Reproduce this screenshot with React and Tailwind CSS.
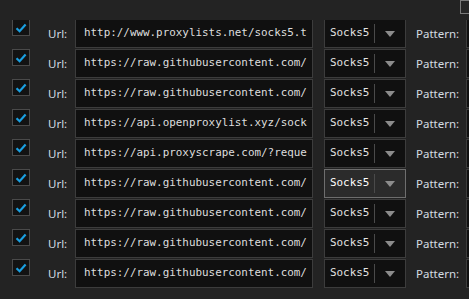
import React from 'react'

// visible part of each source url (the field shows whole characters only)
const sources = [
    'http://www.proxylists.net/socks5.t',
    'https://raw.githubusercontent.com/',
    'https://raw.githubusercontent.com/',
    'https://api.openproxylist.xyz/sock',
    'https://api.proxyscrape.com/?reque',
    'https://raw.githubusercontent.com/',
    'https://raw.githubusercontent.com/',
    'https://raw.githubusercontent.com/',
    'https://raw.githubusercontent.com/',
]

const mono = { fontFamily: '"DejaVu Sans Mono", "Liberation Mono", monospace' }

const Check = () => (
    <div className="w-[18px] h-[17px] shrink-0 border border-[#4a4a4a] bg-[#121212] flex items-center justify-center">
        <svg width="12" height="10" viewBox="0 0 12 10">
            <path d="M1.5 5.2 L4.6 8.2 L10.6 1.6" fill="none" stroke="#1a9fe0" strokeWidth="2.2" />
        </svg>
    </div>
)

const Row = ({ url, active }) => (
    <div className="flex items-start h-[29px] shrink-0">
        <div className="w-[12px] shrink-0" />
        <Check />
        <div className="w-[45px] shrink-0 h-full flex items-center pl-[18px] text-[11.5px] text-[#d4dbe2] font-['Noto_Sans',sans-serif]">
            Url:
        </div>
        <div
            className="w-[238px] h-full shrink-0 border border-[#3c3c3c] bg-[#101010] flex items-center pl-[8px] overflow-hidden whitespace-nowrap text-[10.9px] text-[#dedede]"
            style={mono}
        >
            {url}
        </div>
        <div className="w-[11px] shrink-0" />
        <div
            className={`w-[82px] h-full shrink-0 border flex items-center text-[10.9px] ${active ? 'border-[#6e6e6e] bg-[#2b2b2b] text-white' : 'border-[#3c3c3c] bg-[#101010] text-[#e2e2e2]'}`}
            style={mono}
        >
            <span className="pl-[5px] pr-[5px] shrink-0">Socks5</span>
            <div className="w-px h-[19px] bg-[#4a4a4a]" />
            <div className="flex-1 flex justify-center">
                <svg width="10" height="6" viewBox="0 0 10 6">
                    <path d="M0 0 H10 L5 6 Z" fill="#8c8c8c" />
                </svg>
            </div>
        </div>
        <div className="w-[60px] h-full shrink-0 flex items-center pl-[10px] text-[11.5px] text-[#d4dbe2] font-['Noto_Sans',sans-serif]">
            Pattern:
        </div>
        <div className="w-[60px] h-full shrink-0 border border-[#3c3c3c] bg-[#101010]" />
    </div>
)

export default function App() {
    return (
        <div className="w-[469px] h-[299px] bg-[#232323] overflow-hidden flex flex-col">
            <div className="h-[20px] shrink-0 flex justify-end">
                <div className="w-[20px] h-[14px] mr-[-11px] border border-[#7a7a7a] bg-[#262626]" />
            </div>
            <div className="flex-1 overflow-hidden">
                <div className="flex flex-col gap-px mt-[-1px]">
                    {sources.map((u, i) => (
                        <Row key={i} url={u} active={i === 5} />
                    ))}
                </div>
            </div>
        </div>
    )
}
